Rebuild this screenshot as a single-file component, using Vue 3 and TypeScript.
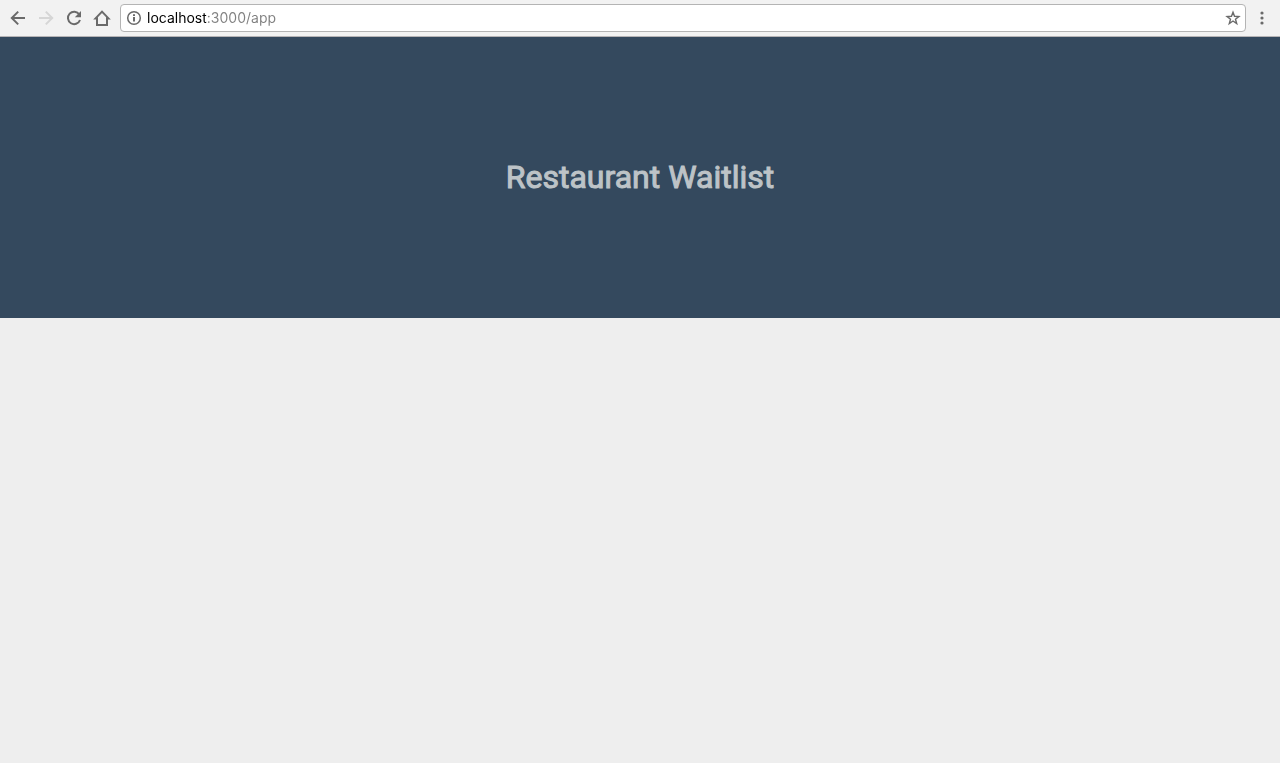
<script setup lang="ts">
import { ref } from 'vue'

const address = ref('localhost:3000/app')
const title = 'Restaurant Waitlist'
</script>

<template>
  <div class="browser">
    <nav class="toolbar" aria-label="Browser toolbar">
      <button class="tool" type="button" aria-label="Back">
        <svg viewBox="0 0 20 20"><path d="M17 10H4M10.2 3.6 3.8 10l6.400 6.400" /></svg>
      </button>
      <button class="tool" type="button" aria-label="Forward" disabled>
        <svg viewBox="0 0 20 20"><path d="M3 10h13M9.800 3.600 16.200 10l-6.400 6.400" /></svg>
      </button>
      <button class="tool" type="button" aria-label="Reload">
        <svg viewBox="0 0 20 20">
          <path d="M15.300 6.500A6.200 6.200 0 1 0 16 12" />
          <path class="solid" d="M17 3v6.200h-6.200z" />
        </svg>
      </button>
      <button class="tool" type="button" aria-label="Home">
        <svg viewBox="0 0 20 20"><path d="M3.500 10.400H5V17h10v-6.600h1.500L10 3.600z" /></svg>
      </button>
      <div class="omnibox">
        <button class="inner info" type="button" aria-label="Site information">
          <svg viewBox="0 0 16 16">
            <circle cx="8" cy="8" r="6.300" />
            <path class="mark" d="M8 7v4.500M8 4.300V6" />
          </svg>
        </button>
        <input v-model="address" class="address" type="text" aria-label="Address" spellcheck="false" />
        <button class="inner star" type="button" aria-label="Bookmark this page">
          <svg viewBox="0 0 16 16">
            <path d="m8 2.200 1.500 4.100 4.400.2-3.400 2.700 1.200 4.300L8 11l-3.700 2.500 1.200-4.300-3.400-2.700 4.400-.2z" />
          </svg>
        </button>
      </div>
      <button class="tool menu" type="button" aria-label="Menu">
        <svg viewBox="0 0 20 20">
          <circle class="solid" cx="10" cy="5" r="1.600" />
          <circle class="solid" cx="10" cy="10" r="1.600" />
          <circle class="solid" cx="10" cy="15" r="1.600" />
        </svg>
      </button>
    </nav>
    <header class="hero">
      <h1>{{ title }}</h1>
    </header>
    <main class="content"></main>
  </div>
</template>

<style>
body {
  margin: 0;
  background: #eeeeee;
}
</style>

<style scoped>
.browser {
  display: flex;
  flex-direction: column;
  min-height: 100vh;
  font-family: Roboto, "Liberation Sans", sans-serif;
}
.toolbar {
  display: flex;
  align-items: center;
  gap: 8px;
  padding: 4px 8px;
  background: #f2f2f2;
  border-bottom: 1px solid #b6b4b6;
}
button {
  flex: none;
  padding: 0;
  border: 0;
  background: none;
}
svg {
  display: block;
  width: 100%;
  height: 100%;
  fill: none;
  stroke: #6a6a6a;
  stroke-width: 2;
}
.tool {
  width: 20px;
  height: 20px;
}
.tool:disabled svg {
  stroke: #d6d6d6;
}
.solid {
  fill: #6a6a6a;
  stroke: none;
}
.omnibox {
  display: flex;
  flex: 1;
  align-items: center;
  gap: 5px;
  min-width: 0;
  height: 26px;
  padding: 0 4px 0 5px;
  background: #ffffff;
  border: 1px solid #b4b4b4;
  border-radius: 4px;
}
.menu {
  margin-right: -8px;
  margin-left: -2px;
  padding-right: 8px;
  box-sizing: content-box;
}
.inner {
  width: 16px;
  height: 16px;
}
.info svg {
  stroke-width: 1.5;
}
.info .mark {
  stroke-width: 2;
}
.star svg {
  stroke-width: 1.4;
}
.address {
  flex: 1;
  min-width: 0;
  height: 24px;
  padding: 0;
  border: 0;
  outline: 0;
  color: #000000;
  background: linear-gradient(to right, #000000 59px, #808080 59px);
  background-clip: text;
  -webkit-background-clip: text;
  -webkit-text-fill-color: transparent;
  font: 14px/24px Inter, "Liberation Sans", sans-serif;
}
.hero {
  display: flex;
  align-items: center;
  justify-content: center;
  padding: 120px 24px;
  background: #34495e;
}
h1 {
  margin: 0;
  color: #bdc3c7;
  font-size: 32px;
  font-weight: 400;
  line-height: 41px;
  text-align: center;
  -webkit-text-stroke: 1px #bdc3c7;
}
.content {
  flex: 1;
  background: #eeeeee;
}
</style>
